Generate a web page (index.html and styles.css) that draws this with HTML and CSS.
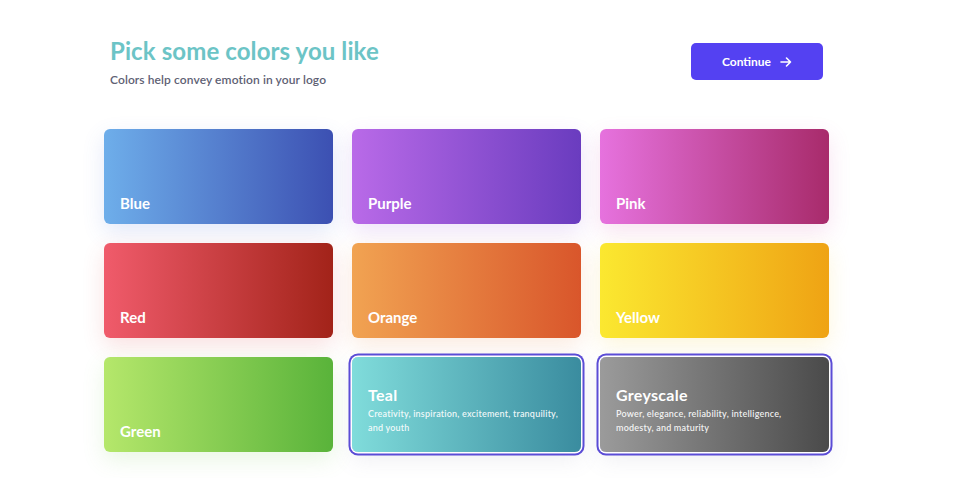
FILE: index.html
```html
<!DOCTYPE html>
<html>
<head>
<meta charset="utf-8">
<link rel="stylesheet" href="styles.css">
</head>
<body>
<div class="page">
  <header class="header">
    <div class="intro">
      <h1 class="title">Pick some colors you like</h1>
      <p class="subtitle">Colors help convey emotion in your logo</p>
    </div>
    <button class="continue">Continue
      <svg class="arrow" width="12" height="12" viewBox="0 0 12 12"><path d="M1 6h9.5M6.5 2l4 4-4 4" fill="none" stroke="#fff" stroke-width="1.6" stroke-linecap="round" stroke-linejoin="round"/></svg>
    </button>
  </header>
  <div class="grid">
    <div class="card blue"><div class="name">Blue</div></div>
    <div class="card purple"><div class="name">Purple</div></div>
    <div class="card pink"><div class="name">Pink</div></div>
    <div class="card red"><div class="name">Red</div></div>
    <div class="card orange"><div class="name">Orange</div></div>
    <div class="card yellow"><div class="name">Yellow</div></div>
    <div class="card green"><div class="name">Green</div></div>
    <div class="card teal selected"><div class="name">Teal</div><div class="desc">Creativity, inspiration, excitement, tranquility, and youth</div></div>
    <div class="card grey selected"><div class="name">Greyscale</div><div class="desc">Power, elegance, reliability, intelligence, modesty, and maturity</div></div>
  </div>
</div>
</body>
</html>
```
FILE: styles.css
```css
* { box-sizing: border-box; }
html, body { margin: 0; padding: 0; background: #fff; }
body { font-family: Lato, "Noto Sans", sans-serif; }
.page { padding: 36px 0 40px 104px; width: 966px; }
.header { display: flex; justify-content: space-between; align-items: flex-start; width: 725px; padding: 0 6px 0 6px; }
.title { margin: 0; font-size: 24px; line-height: 30px; font-weight: 700; color: #6cc4c6; letter-spacing: 0.1px; }
.subtitle { margin: 7px 0 0; font-size: 12px; line-height: 14px; color: #5e6174; font-weight: 600; letter-spacing: 0.1px; }
.continue { margin-top: 7px; width: 132px; height: 37px; border: none; border-radius: 5px; background: #5441f2; color: #fff; font-family: inherit; font-weight: 700; font-size: 12px; display: flex; align-items: center; justify-content: center; gap: 9px; padding: 0; }
.arrow { display: block; }
.grid { margin-top: 42px; display: grid; grid-template-columns: repeat(3, 229px); grid-auto-rows: 95px; gap: 19px; width: 725px; }
.card { border-radius: 6px; padding: 0 16px 12px; display: flex; flex-direction: column; justify-content: flex-end; color: #fff; }
.name { font-size: 15px; font-weight: 700; line-height: 18px; }
.desc { font-size: 9px; line-height: 14px; font-weight: 600; margin-top: 3px; color: rgba(255,255,255,0.9); letter-spacing: 0.2px; max-width: 196px; }
.selected { justify-content: center; padding-bottom: 0; padding-top: 12px; box-shadow: 0 0 0 1.5px #fff, 0 0 0 3.5px #5b4cd6, 0 8px 22px rgba(120,120,160,0.12) !important; }
.selected .name { font-size: 16px; letter-spacing: 0.3px; }
.blue { background: linear-gradient(90deg, #6eaeea, #3c50b2); box-shadow: 0 8px 22px rgba(80,110,220,0.16); }
.purple { background: linear-gradient(90deg, #b96ae8, #6a3cbf); box-shadow: 0 8px 22px rgba(150,80,220,0.16); }
.pink { background: linear-gradient(90deg, #e672de, #a82b6b); box-shadow: 0 8px 22px rgba(210,80,170,0.16); }
.red { background: linear-gradient(90deg, #f05b6b, #a22319); box-shadow: 0 8px 22px rgba(220,70,70,0.16); }
.orange { background: linear-gradient(90deg, #f1a352, #d9562b); box-shadow: 0 8px 22px rgba(230,130,60,0.16); }
.yellow { background: linear-gradient(90deg, #fbe830, #efa314); box-shadow: 0 8px 22px rgba(240,200,40,0.16); }
.green { background: linear-gradient(90deg, #b5e76b, #59b33a); box-shadow: 0 8px 22px rgba(120,200,80,0.16); }
.teal { background: linear-gradient(90deg, #80dcdb, #3a8c9f); }
.grey { background: linear-gradient(90deg, #9b9b9b, #4a4a4a); }
```
